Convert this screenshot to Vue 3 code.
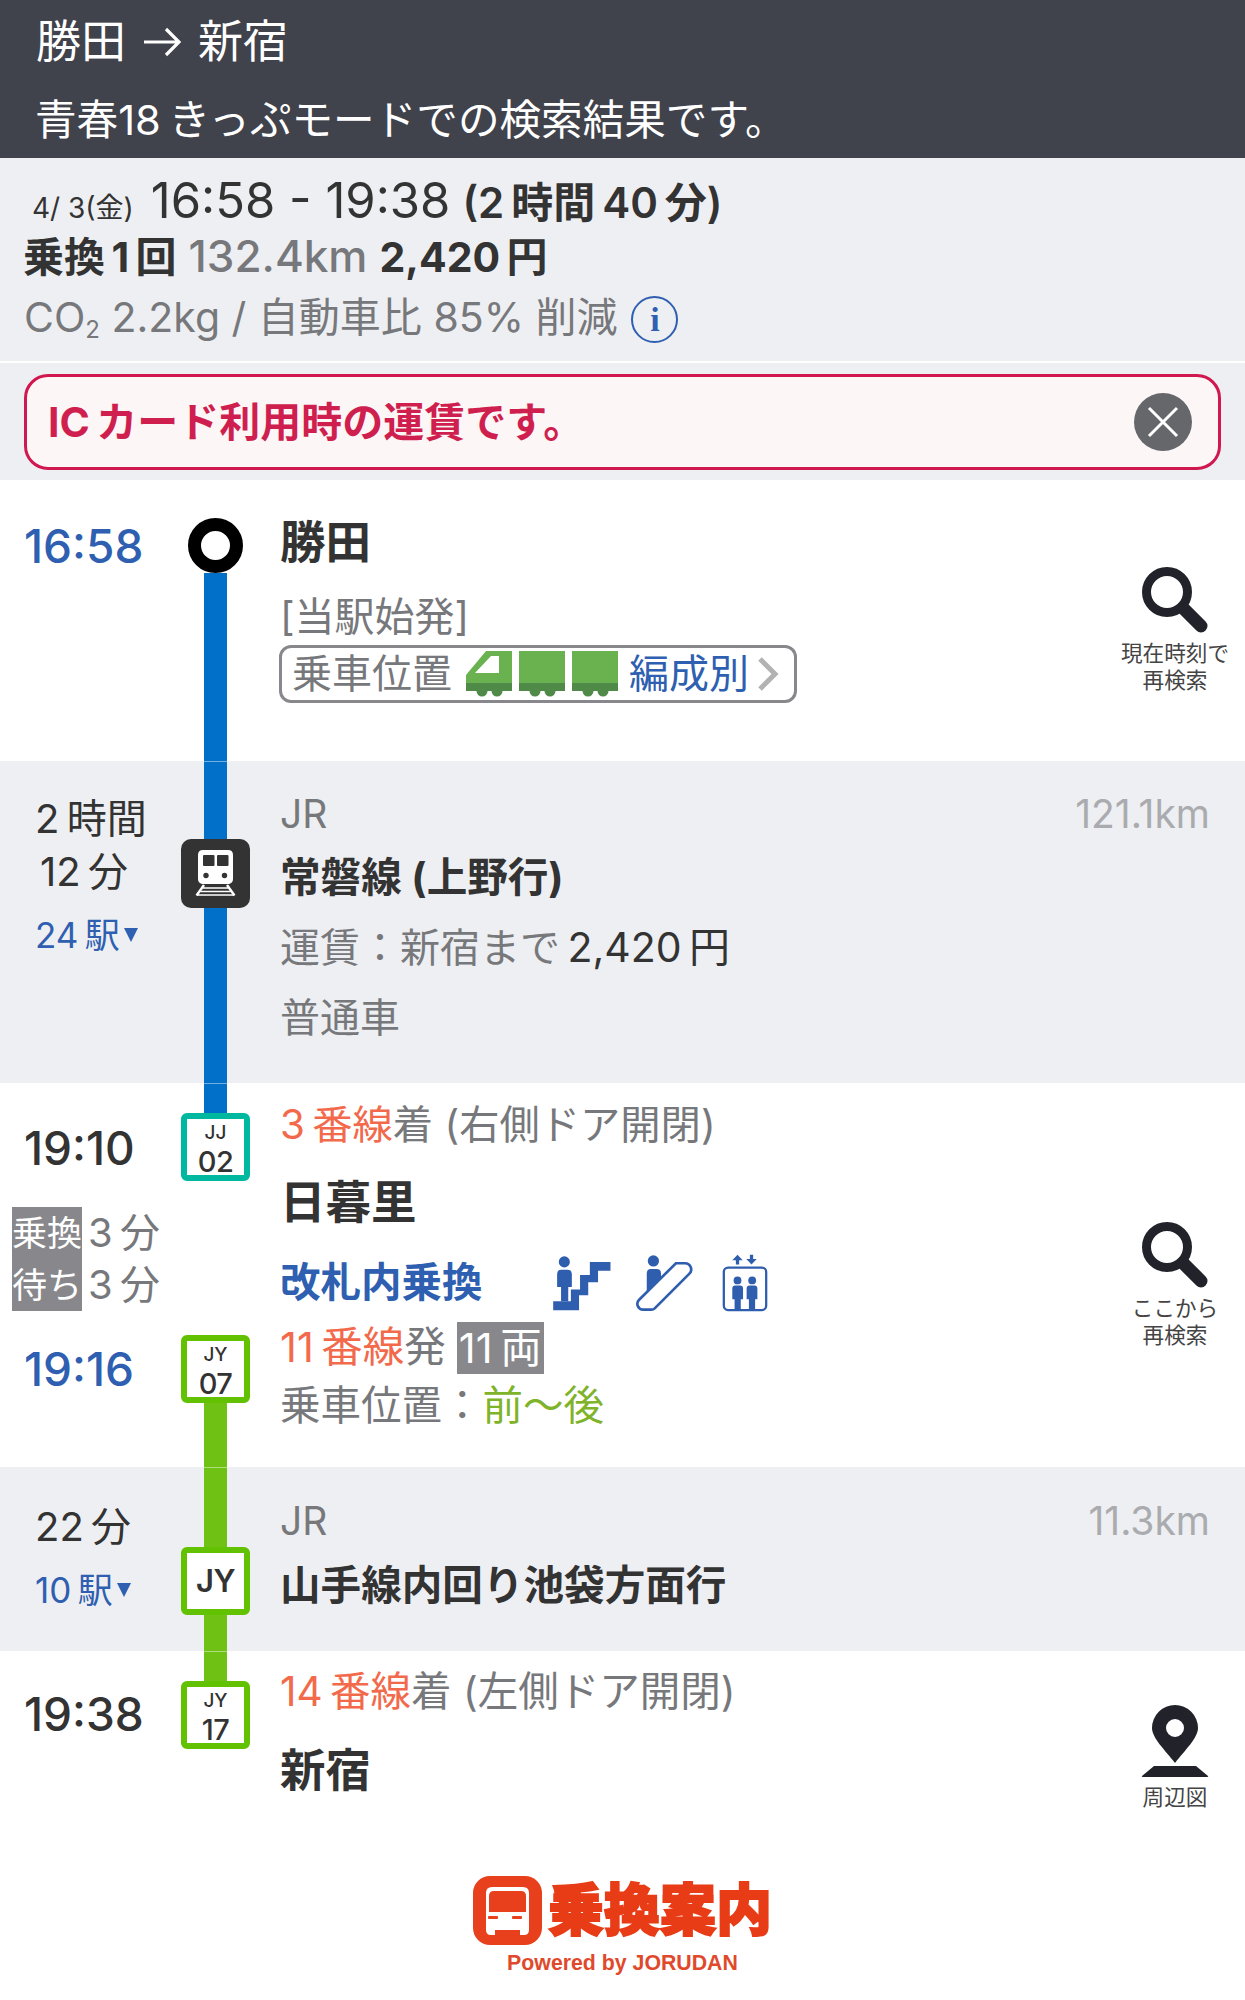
<template>
  <div class="page">
    <header class="top">
      <div class="top__route">
        <span>勝田</span>
        <svg class="top__arrow" viewBox="0 0 38 30" width="38" height="30">
          <path d="M1 15H36M23 2l13 13-13 13" fill="none" stroke="#fff" stroke-width="3.2" />
        </svg>
        <span>新宿</span>
      </div>
      <div class="top__mode">青春18&#8201;きっぷモードでの検索結果です。</div>
    </header>

    <section class="summary">
      <div class="summary__row summary__row--time">
        <span class="summary__date">4/ 3(金)</span>
        <span class="summary__range">16:58 - 19:38</span>
        <b class="summary__total">(2&#8201;時間&#8201;40&#8201;分)</b>
      </div>
      <div class="summary__row summary__row--fare">
        <b class="summary__trans">乗換&#8201;1&#8201;回</b>
        <span class="summary__km">132.4km</span>
        <b class="summary__fare">2,420&#8201;円</b>
      </div>
      <div class="summary__row summary__row--co2">
        <span>CO<small>2</small> 2.2kg / 自動車比 85% 削減</span>
        <span class="info">i</span>
      </div>
    </section>

    <div class="notice-wrap">
      <div class="notice">
        <b class="notice__text">IC&#8201;カード利用時の運賃です。</b>
        <svg class="notice__close" viewBox="0 0 58 58" width="58" height="58">
          <circle cx="29" cy="29" r="29" fill="#66676b" />
          <path d="M15 15l28 28M43 15L15 43" stroke="#fff" stroke-width="3" />
        </svg>
      </div>
    </div>

    <!-- 勝田 -->
    <section class="leg leg--first">
      <div class="side">
        <div class="clock clock--blue">16:58</div>
      </div>
      <div class="rail">
        <div class="rail__dot"></div>
        <div class="rail__line rail__line--blue rail__line--fill"></div>
      </div>
      <div class="main">
        <div class="station">勝田</div>
        <div class="row row--origin muted">[当駅始発]</div>
        <div class="position">
          <span class="muted">乗車位置</span>
          <span class="position__cars">
            <svg v-for="(car, i) in cars" :key="i" viewBox="0 0 46 46" width="46" height="46">
              <path :d="car.lead ? 'M0 24L20 0H46V40H0Z' : 'M0 0H46V40H0Z'" fill="#6ab14f" />
              <rect y="32" width="46" height="8" fill="#4f8a48" />
              <circle cx="16" cy="40" r="5.5" fill="#4f8a48" />
              <circle cx="31" cy="40" r="5.5" fill="#4f8a48" />
              <path v-if="car.lead" d="M9 22L25 5H33V22Z" fill="#fff" />
            </svg>
          </span>
          <span class="position__link">編成別</span>
          <svg viewBox="0 0 22 34" width="22" height="34">
            <path d="M3 2l15 15L3 32" fill="none" stroke="#b2b2b2" stroke-width="5" />
          </svg>
        </div>
      </div>
      <div class="aside aside--now">
        <svg class="search" viewBox="0 0 66 66" width="66" height="66">
          <circle cx="25" cy="25" r="20.5" fill="none" stroke="#22232a" stroke-width="9" />
          <path d="M41 41l18 18" stroke="#22232a" stroke-width="13" stroke-linecap="round" />
        </svg>
        <div class="aside__label">現在時刻で<br />再検索</div>
      </div>
    </section>

    <!-- 常磐線 -->
    <section class="leg leg--ride">
      <div class="side">
        <div class="span span--first">2&#8201;時間</div>
        <div class="span span--second">12&#8201;分</div>
        <div class="stops">24&#8201;駅<i class="stops__arrow"></i></div>
      </div>
      <div class="rail">
        <div class="rail__line rail__line--blue rail__line--seam rail__line--to-icon"></div>
        <svg class="rail__train" viewBox="0 0 69 69" width="69" height="69">
          <rect width="69" height="69" rx="10" fill="#333" />
          <path d="M22 11H47Q52 11 52 16V40Q52 44 48 45H21Q17 44 17 40V16Q17 11 22 11Z" fill="#fff" />
          <rect x="22" y="16" width="11.500" height="11" rx="1" fill="#333" />
          <rect x="36" y="16" width="11.500" height="11" rx="1" fill="#333" />
          <circle cx="25" cy="36.500" r="2.700" fill="#333" />
          <circle cx="43.500" cy="36.500" r="2.700" fill="#333" />
          <path d="M23 46L15.500 56.500M46 46L53.500 56.500" stroke="#fff" stroke-width="2.400" fill="none" />
          <path d="M22 49H47M19.500 52.500H49.500M16 56H53" stroke="#fff" stroke-width="1.500" fill="none" />
        </svg>
        <div class="rail__line rail__line--blue rail__line--fill"></div>
      </div>
      <div class="main main--wide">
        <div class="company"><span>JR</span><span class="company__km">121.1km</span></div>
        <div class="line-name">常磐線 (上野行)</div>
        <div class="row row--fare muted">運賃：新宿まで<span class="dark">&#8201;2,420&#8201;円</span></div>
        <div class="row row--kind muted">普通車</div>
      </div>
    </section>

    <!-- 日暮里 -->
    <section class="leg leg--transfer">
      <div class="side">
        <div class="clock clock--arrive">19:10</div>
        <div class="wait">
          <div v-for="item in transfer" :key="item.label" class="wait__row">
            <span class="wait__tag">{{ item.label }}</span>
            <span class="wait__min">{{ item.min }}</span>
          </div>
        </div>
        <div class="clock clock--blue clock--depart">19:16</div>
      </div>
      <div class="rail">
        <div class="rail__line rail__line--blue rail__line--seam rail__line--in"></div>
        <div class="badge badge--jj"><small>JJ</small><b>02</b></div>
        <div class="rail__gap"></div>
        <div class="badge badge--jy"><small>JY</small><b>07</b></div>
        <div class="rail__line rail__line--green rail__line--fill"></div>
      </div>
      <div class="main">
        <div class="row row--platform"><span class="orange">3&#8201;番線</span><span class="muted">着 (右側ドア開閉)</span></div>
        <div class="station station--mid">日暮里</div>
        <div class="route">
          <b class="route__link">改札内乗換</b>
          <svg class="route__stairs" viewBox="68 70 176 168" width="58" height="55">
            <circle cx="102" cy="88" r="17" fill="#2f5eae" />
            <path d="M80 125Q80 112 92 112H112Q125 112 125 125V165H114V208H92V165H80Z" fill="#2f5eae" />
            <path d="M243 88V115H205V150H175V190H147V236H68V208H122V172H150V128H180V88Z" fill="#2f5eae" />
          </svg>
          <svg class="route__esc" viewBox="310 70 180 172" width="60" height="57">
            <circle cx="368" cy="88" r="17" fill="#2f5eae" />
            <path d="M348 126Q348 112 360 112H378Q391 112 391 126V140L348 182Z" fill="#2f5eae" />
            <path d="M436 95H463A18.5 18.5 0 0 1 476 127L372 231Q368 235 362 235H337A17.5 17.5 0 0 1 325 205Z" fill="none" stroke="#2f5eae" stroke-width="8" />
          </svg>
          <svg class="route__lift" viewBox="570 66 146 178" width="48" height="58">
            <rect x="578" y="108" width="130" height="130" rx="13" fill="none" stroke="#2f5eae" stroke-width="7" />
            <path d="M620 68l16 17h-11v13h-10V85h-11ZM663 98l16-17h-11V68h-10v13h-11Z" fill="#2f5eae" />
            <circle cx="620" cy="147" r="12" fill="#2f5eae" />
            <circle cx="665" cy="147" r="12" fill="#2f5eae" />
            <path d="M604 172Q604 163 613 163H628Q637 163 637 172V205H630V236H611V205H604ZM648 172Q648 163 657 163H672Q681 163 681 172V205H674V236H655V205H648Z" fill="#2f5eae" />
          </svg>
        </div>
        <div class="row row--depart">
          <span class="orange">11&#8201;番線</span><span class="muted">発</span>
          <span class="cars-tag">11&#8201;両</span>
        </div>
        <div class="row row--board muted">乗車位置：<span class="lime">前〜後</span></div>
      </div>
      <div class="aside aside--here">
        <svg class="search" viewBox="0 0 66 66" width="66" height="66">
          <circle cx="25" cy="25" r="20.5" fill="none" stroke="#22232a" stroke-width="9" />
          <path d="M41 41l18 18" stroke="#22232a" stroke-width="13" stroke-linecap="round" />
        </svg>
        <div class="aside__label">ここから<br />再検索</div>
      </div>
    </section>

    <!-- 山手線 -->
    <section class="leg leg--ride leg--ride-short">
      <div class="side">
        <div class="span span--first">22&#8201;分</div>
        <div class="stops">10&#8201;駅<i class="stops__arrow"></i></div>
      </div>
      <div class="rail">
        <div class="rail__line rail__line--green rail__line--seam rail__line--to-jy"></div>
        <div class="badge badge--jy badge--solo"><b>JY</b></div>
        <div class="rail__line rail__line--green rail__line--fill"></div>
      </div>
      <div class="main main--wide">
        <div class="company"><span>JR</span><span class="company__km">11.3km</span></div>
        <div class="line-name">山手線内回り池袋方面行</div>
      </div>
    </section>

    <!-- 新宿 -->
    <section class="leg leg--last">
      <div class="side">
        <div class="clock clock--last">19:38</div>
      </div>
      <div class="rail">
        <div class="rail__line rail__line--green rail__line--seam rail__line--in"></div>
        <div class="badge badge--jy"><small>JY</small><b>17</b></div>
      </div>
      <div class="main">
        <div class="row row--platform"><span class="orange">14&#8201;番線</span><span class="muted">着 (左側ドア開閉)</span></div>
        <div class="station station--end">新宿</div>
      </div>
      <div class="aside aside--map">
        <svg viewBox="0 0 68 72" width="68" height="72">
          <path fill-rule="evenodd" d="M34 58C24 45 11 33 11 23A23 23 0 0 1 57 23C57 33 44 45 34 58ZM34 14A9 9 0 1 0 34 32A9 9 0 1 0 34 14Z" fill="#22232a" />
          <path d="M13 61H55L67 71Q68 72 66 72H2Q0 72 1 71Z" fill="#22232a" />
        </svg>
        <div class="aside__label">周辺図</div>
      </div>
    </section>

    <footer class="brand">
      <div class="brand__logo">
        <svg viewBox="0 0 69 69" width="69" height="69">
          <rect width="69" height="69" rx="17" fill="#e8401c" />
          <path d="M19 11H50Q56 11 56 17V54Q56 59 51 59H47V54H22V59H18Q13 59 13 54V17Q13 11 19 11Z" fill="#fff" />
          <path d="M21 15H48Q53 15 53 20V36H16V20Q16 15 21 15Z" fill="#e8401c" />
          <rect x="15" y="40" width="10" height="3" rx="1" fill="#e8401c" />
          <rect x="39" y="40" width="10" height="3" rx="1" fill="#e8401c" />
        </svg>
        <span class="brand__name">乗換案内</span>
      </div>
      <div class="brand__by">Powered by JORUDAN</div>
    </footer>
  </div>
</template>

<script setup>
const cars = [{ lead: true }, { lead: false }, { lead: false }]

const transfer = [
  { label: '乗換', min: '3\u2009分' },
  { label: '待ち', min: '3\u2009分' },
]
</script>

<style scoped>
.page {
  width: 1245px;
  height: 2000px;
  overflow: hidden;
  background: #fff;
  color: #333;
  font-family: Inter, "Noto Sans CJK JP", sans-serif;
  font-size: 40px;
  line-height: 50px;
}

.muted {
  color: #77787b;
}

.dark {
  color: #333;
  font-size: 41px;
}

.orange {
  color: #f26a4b;
}

.lime {
  color: #7fb32a;
}

.top {
  height: 158px;
  padding: 14px 36px 0;
  box-sizing: border-box;
  background: #40424c;
  color: #fff;
}

.top__route {
  display: flex;
  align-items: center;
  gap: 17px;
  height: 56px;
  font-size: 45px;
}

.top__mode {
  margin-top: 25px;
  margin-left: -1px;
  font-size: 41.6px;
}

.summary {
  height: 203px;
  padding: 18px 24px 0;
  box-sizing: border-box;
  background: #eeeff2;
}

.summary__row {
  display: flex;
  align-items: baseline;
  height: 50px;
}

.summary__date {
  margin-left: 8px;
  font-size: 28px;
}

.summary__range {
  margin-left: 17px;
  font-size: 49px;
}

.summary__total {
  margin-left: 12px;
  font-size: 42px;
  font-weight: 600;
}

.summary__row--fare {
  gap: 12px;
  margin-top: 5px;
}

.summary__trans {
  margin-left: -1px;
  font-size: 41px;
  font-weight: 700;
}

.summary__fare {
  font-size: 41px;
  font-weight: 700;
}

.summary__km {
  color: #77787b;
  font-size: 44px;
  font-weight: 500;
}

.summary__row--co2 {
  align-items: center;
  gap: 14px;
  margin-top: 17px;
  color: #77787b;
  font-size: 41px;
}

.summary__row--co2 small {
  font-size: 24px;
  vertical-align: -6px;
}

.info {
  width: 43px;
  height: 43px;
  margin-bottom: 8px;
  border: 2.5px solid #2f5fb0;
  border-radius: 50%;
  color: #2f5fb0;
  font-family: "Liberation Serif", serif;
  font-size: 34px;
  font-weight: 700;
  line-height: 43px;
  text-align: center;
}

.notice-wrap {
  height: 117px;
  margin-top: 2px;
  padding: 11px 24px 0;
  box-sizing: border-box;
  background: #eeeff2;
}

.notice {
  display: flex;
  align-items: center;
  justify-content: space-between;
  height: 96px;
  padding: 0 26px 0 21px;
  box-sizing: border-box;
  border: 3px solid #d0174f;
  border-radius: 24px;
  background: #fdf6f7;
}

.notice__text {
  color: #cf1f4f;
  font-size: 41px;
  font-weight: 700;
}

.leg {
  display: grid;
  grid-template-columns: 181px 69px 1fr 140px;
}

.leg--ride {
  background: #eeeff2;
}

.side {
  padding-left: 24px;
}

.clock {
  font-size: 46px;
  font-weight: 500;
}

.clock--blue {
  color: #2f5fb0;
}

.leg--first .side {
  padding-top: 41px;
}

.clock--arrive {
  margin-top: 40px;
}

.clock--depart {
  margin-top: 33px;
}

.clock--last {
  margin-top: 38px;
}

.span--first {
  margin: 33px 0 0 11px;
}

.span--second {
  margin: 3px 0 0 16px;
}

.leg--ride-short .span--first {
  margin-top: 35px;
}

.stops {
  display: flex;
  align-items: center;
  margin: 16px 0 0 11px;
  color: #2f5fb0;
  font-size: 35px;
  line-height: 44px;
}

.stops__arrow {
  width: 0;
  height: 0;
  margin-left: 4px;
  border-top: 14px solid #2f5fb0;
  border-left: 7px solid transparent;
  border-right: 7px solid transparent;
}

.wait {
  margin: 34px 0 0 -12px;
}

.wait__row {
  display: flex;
  height: 52px;
  align-items: center;
}

.wait__tag {
  width: 70px;
  height: 52px;
  background: #88888c;
  color: #fff;
  font-size: 35px;
  line-height: 52px;
  white-space: nowrap;
}

.wait__min {
  margin-left: 6px;
  color: #77787b;
}

.rail {
  display: flex;
  flex-direction: column;
  align-items: center;
}

.rail__dot {
  flex: none;
  box-sizing: border-box;
  width: 55px;
  height: 55px;
  margin-top: 38px;
  border: 13px solid #000;
  border-radius: 50%;
  background: #fff;
}

.rail__line {
  width: 23px;
  flex: none;
}

.rail__line--fill {
  flex: 1;
}

.rail__line--blue {
  background: #0070c8;
}

.rail__line--green {
  background: #6fc114;
}

.rail__line--seam {
  border-top: 1px solid rgba(255, 255, 255, 0.45);
  box-sizing: border-box;
}

.rail__line--to-icon {
  height: 78px;
}

.rail__line--in {
  height: 30px;
}

.rail__line--to-jy {
  height: 80px;
}

.rail__gap {
  height: 154px;
}

.rail__train {
  flex: none;
}

.badge {
  display: flex;
  flex: none;
  flex-direction: column;
  align-items: center;
  box-sizing: border-box;
  width: 69px;
  height: 68px;
  padding-top: 2px;
  border: 6px solid;
  border-radius: 6px;
  background: #fff;
  color: #333;
}

.badge small {
  font-size: 19px;
  font-weight: 500;
  line-height: 23px;
}

.badge b {
  font-size: 29px;
  font-weight: 500;
  line-height: 35px;
  letter-spacing: -0.5px;
}

.badge--jj {
  border-color: #00b8a0;
}

.badge--jy {
  border-color: #62c100;
}

.badge--solo {
  justify-content: center;
  padding-top: 0;
}

.badge--solo b {
  font-size: 31px;
  font-weight: 600;
  line-height: 38px;
}

.main {
  padding-left: 30px;
  min-width: 0;
}

.main--wide {
  grid-column: span 2;
  padding-right: 35px;
}

.row {
  white-space: nowrap;
}

.station {
  margin-top: 37px;
  font-size: 45.5px;
  font-weight: 700;
  line-height: 52px;
}

.row--origin {
  margin-top: 23px;
}

.position {
  display: flex;
  align-items: center;
  box-sizing: border-box;
  width: 518px;
  height: 58px;
  margin: 3px 0 58px -1px;
  padding-left: 10px;
  border: 3px solid #88888c;
  border-radius: 12px;
}

.position__cars {
  display: flex;
  gap: 7px;
  margin: 0 11px 0 14px;
}

.position__cars svg {
  display: block;
}

.position__link {
  margin-right: 8px;
  color: #2f5fb0;
}

.company {
  display: flex;
  justify-content: space-between;
  margin-top: 31px;
  color: #77787b;
  font-size: 39px;
  line-height: 44px;
}

.company__km {
  color: #aaabae;
}

.line-name {
  margin-top: 17px;
  font-size: 40.6px;
  font-weight: 700;
}

.row--fare {
  margin-top: 19px;
}

.row--kind {
  margin: 20px 0 40px;
}

.leg--ride-short .company {
  margin-top: 32px;
}

.leg--ride-short .line-name {
  margin: 18px 0 40px;
}

.row--platform {
  margin-top: 16px;
  font-size: 40.3px;
  line-height: 52px;
}

.leg--last .row--platform {
  margin-top: 15px;
  font-size: 40.5px;
}

.station--mid {
  margin-top: 26px;
}

.station--end {
  margin-top: 27px;
}

.route {
  display: flex;
  align-items: center;
  height: 60px;
  margin-top: 24px;
}

.route__link {
  color: #2f5fb0;
  font-size: 40.5px;
  font-weight: 700;
}

.route__stairs {
  margin-left: 70px;
}

.route__esc {
  margin-left: 23px;
}

.route__lift {
  margin-left: 27px;
}

.row--depart {
  display: flex;
  margin-top: 9px;
  font-size: 41.5px;
}

.cars-tag {
  height: 52px;
  margin-left: 11px;
  padding: 0 2px;
  background: #88888c;
  color: #fff;
  line-height: 52px;
}

.row--board {
  margin: 7px 0 36px;
  font-size: 40.5px;
}

.aside {
  display: flex;
  flex-direction: column;
  align-items: center;
}

.aside--now {
  padding-top: 87px;
}

.aside--here {
  padding-top: 139px;
}

.aside--map {
  padding-top: 54px;
}

.aside__label {
  margin-top: 7px;
  color: #444;
  font-size: 21.6px;
  line-height: 27px;
  text-align: center;
  white-space: nowrap;
}

.brand {
  display: flex;
  flex-direction: column;
  align-items: center;
  padding-top: 65px;
}

.brand__logo {
  display: flex;
  align-items: center;
  gap: 6px;
  height: 69px;
}

.brand__name {
  color: #e83c17;
  font-size: 56px;
  font-weight: 900;
  line-height: 69px;
  -webkit-text-stroke: 2px #e83c17;
}

.brand__by {
  margin-top: 3px;
  color: #e0492b;
  font-family: "Liberation Sans", sans-serif;
  font-size: 21.3px;
  font-weight: 700;
  line-height: 30px;
}
</style>
